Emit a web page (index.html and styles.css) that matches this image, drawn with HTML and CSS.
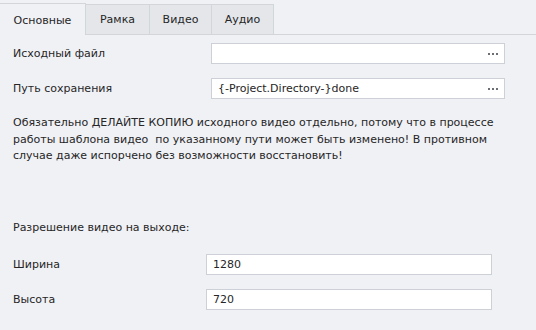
FILE: index.html
```html
<!DOCTYPE html>
<html>
<head>
<meta charset="utf-8">
<link rel="stylesheet" href="styles.css">
</head>
<body>
<div class="window">
  <div class="tabs">
    <div class="tab active">Основные</div>
    <div class="tab">Рамка</div>
    <div class="tab">Видео</div>
    <div class="tab">Аудио</div>
    <div class="tab-fill"></div>
  </div>
  <div class="panel">
    <div class="rows rows-top">
      <div class="row">
        <span class="label">Исходный файл</span>
        <div class="field"><span class="value"></span><span class="dots"><i></i><i></i><i></i></span></div>
      </div>
      <div class="row">
        <span class="label">Путь сохранения</span>
        <div class="field"><span class="value">{-Project.Directory-}done</span><span class="dots"><i></i><i></i><i></i></span></div>
      </div>
    </div>
    <p class="note">Обязательно ДЕЛАЙТЕ КОПИЮ исходного видео отдельно, потому что в процессе работы шаблона видео&nbsp; по указанному пути может быть изменено! В противном случае даже испорчено без возможности восстановить!</p>
    <div class="section">Разрешение видео на выходе:</div>
    <div class="rows rows-bottom">
      <div class="row">
        <span class="label">Ширина</span>
        <div class="field"><span class="value">1280</span></div>
      </div>
      <div class="row">
        <span class="label">Высота</span>
        <div class="field"><span class="value">720</span></div>
      </div>
    </div>
  </div>
</div>
</body>
</html>
```
FILE: styles.css
```css
html, body {
  margin: 0;
  padding: 0;
  background: #f0f1f5;
}
body {
  font-family: "DejaVu Sans", "Noto Sans", sans-serif;
  font-size: 11px;
  color: #262626;
  width: 536px;
  height: 330px;
  overflow: hidden;
}
.tabs {
  display: flex;
  height: 35px;
  align-items: flex-end;
}
.tab {
  box-sizing: border-box;
  height: 31px;
  background: #e4e6ea;
  border: 1px solid #d2d5da;
  border-left: none;
  display: flex;
  align-items: center;
  justify-content: center;
}
.tab:nth-child(2) { width: 64px; }
.tab:nth-child(3) { width: 62px; }
.tab:nth-child(4) { width: 62px; }
.tab.active {
  width: 86px;
  height: 32px;
  background: #f0f1f5;
  border-bottom: none;
  padding-top: 1px;
}
.tab-fill {
  flex: 1;
  border-bottom: 1px solid #d2d5da;
}
.panel {
  padding: 8px 13px 0 13px;
}
.rows {
  display: flex;
  flex-direction: column;
  gap: 14px;
}
.row {
  display: grid;
  align-items: center;
}
.rows-top .row { grid-template-columns: 198px 294px; }
.rows-bottom .row { grid-template-columns: 193px 286px; }
.field {
  box-sizing: border-box;
  height: 21px;
  background: #fff;
  border: 1px solid #cdd0d6;
  display: flex;
  align-items: center;
  padding: 0 6px;
}
.value { flex: 1; white-space: nowrap; }
.dots {
  display: flex;
  gap: 2px;
}
.dots i {
  display: block;
  width: 2px;
  height: 2px;
  background: #6b6e75;
}
.note {
  margin: 16px 0 0 0;
  line-height: 16.5px;
  width: 500px;
}
.section {
  margin-top: 55px;
  line-height: 16px;
}
.rows-bottom { margin-top: 18px; }
```
